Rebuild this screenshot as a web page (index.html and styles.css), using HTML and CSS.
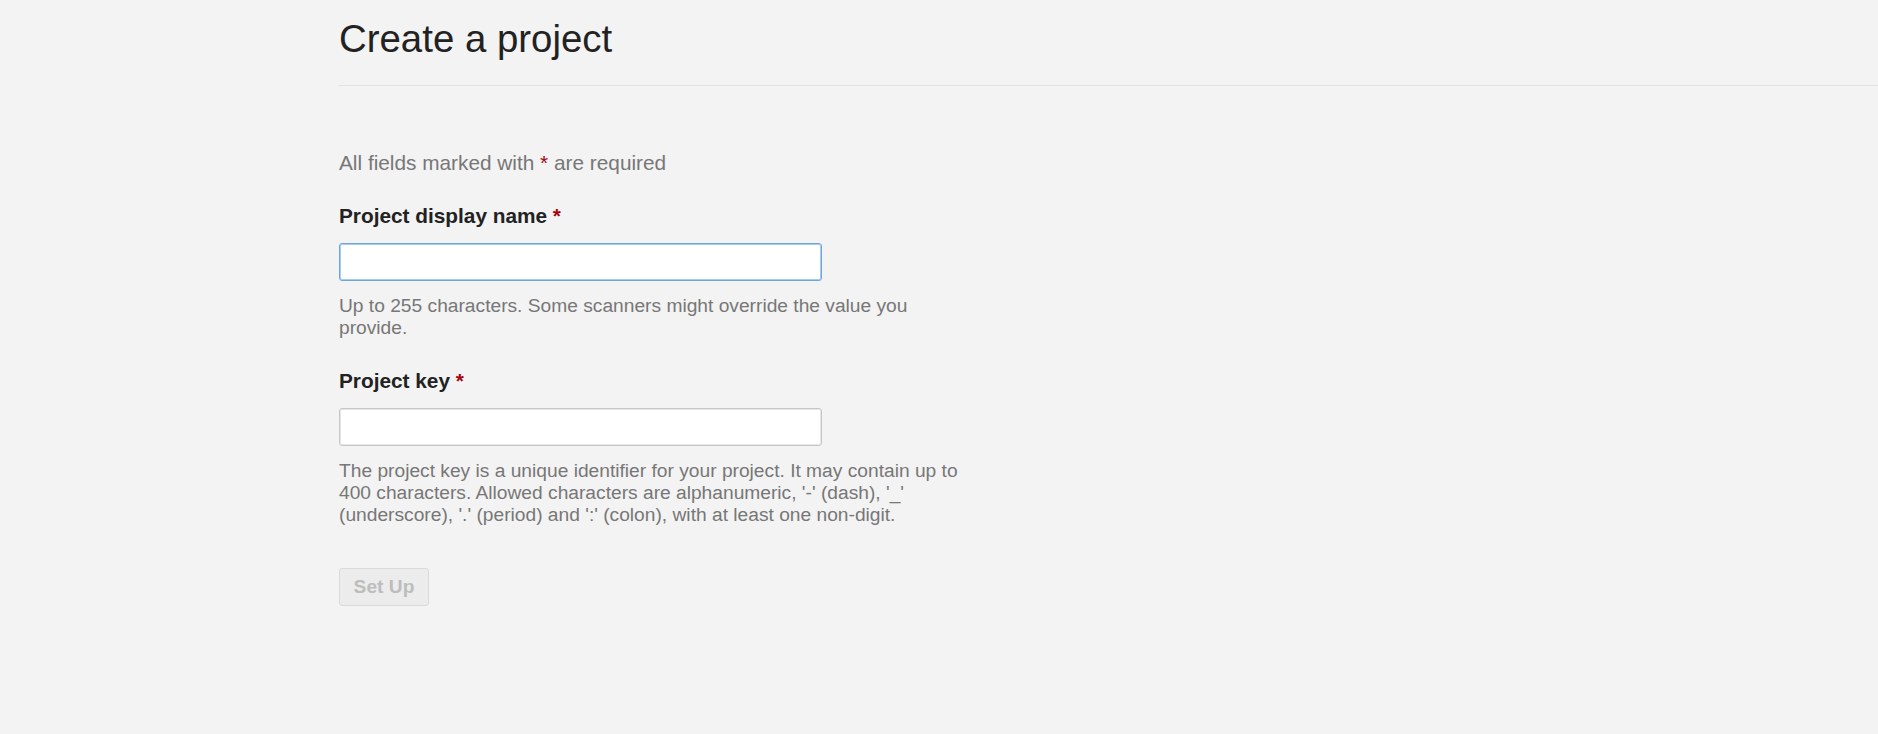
FILE: index.html
```html
<!DOCTYPE html>
<html lang="en">
<head>
<meta charset="utf-8">
<title>Create a project</title>
<link rel="stylesheet" href="styles.css">
</head>
<body>
<div class="page">
  <header class="page-header">
    <h1 class="page-title">Create a project</h1>
  </header>
  <form class="create-form">
    <p class="required-note">All fields marked with <span class="required">*</span> are required</p>
    <div class="field">
      <label class="field-label" for="project-name">Project display name <span class="required">*</span></label>
      <input class="field-input is-focused" id="project-name" type="text">
      <p class="field-help">Up to 255 characters. Some scanners might override the value you provide.</p>
    </div>
    <div class="field">
      <label class="field-label" for="project-key">Project key <span class="required">*</span></label>
      <input class="field-input" id="project-key" type="text">
      <p class="field-help">The project key is a unique identifier for your project. It may contain up to 400 characters. Allowed characters are alphanumeric, '-' (dash), '_' (underscore), '.' (period) and ':' (colon), with at least one non-digit.</p>
    </div>
    <button class="submit-button" type="button" disabled>Set Up</button>
  </form>
</div>
</body>
</html>
```
FILE: styles.css
```css
html, body {
  margin: 0;
  padding: 0;
  background: #f3f3f3;
}

body {
  font-family: "Liberation Sans", Arial, sans-serif;
  font-size: 20.8px;
  color: #333;
}

.page {
  padding-left: 339px;
}

.page-header {
  padding-top: 15px;
  padding-bottom: 22px;
  border-bottom: 1px solid #e2e2e2;
}

.page-title {
  margin: 0;
  font-size: 38.4px;
  line-height: 48px;
  font-weight: 400;
  color: #222;
}

.create-form {
  padding-top: 63px;
}

.required-note {
  margin: 0 0 25px;
  line-height: 28px;
  color: #777;
}

.required-note .required {
  font-weight: 400;
}

.required {
  color: #a4030f;
  font-weight: 700;
}

.field {
  display: flex;
  flex-direction: column;
  align-items: flex-start;
  margin-bottom: 28px;
}

.field-label {
  display: block;
  line-height: 28px;
  font-weight: 700;
  color: #222;
  margin-bottom: 13px;
}

.field-input {
  box-sizing: border-box;
  width: 483px;
  height: 38px;
  margin: 0;
  padding: 0 8px;
  background: #fff;
  border: 1px solid #c6c6c6;
  border-radius: 3px;
  box-shadow: inset 0 0 0 1px #e6e6e6;
  font: inherit;
  outline: none;
}

.field-input.is-focused {
  border-color: #6ea6dc;
  box-shadow: inset 0 0 0 1px #a9cbed;
}

.field-help {
  margin: 14px 0 0;
  max-width: 640px;
  font-size: 19.2px;
  line-height: 22px;
  color: #777;
}

.submit-button {
  display: block;
  box-sizing: border-box;
  margin-top: 42px;
  height: 38px;
  width: 90px;
  padding: 0;
  font-family: "Liberation Sans", Arial, sans-serif;
  font-size: 19.2px;
  font-weight: 700;
  color: #bdbdbd;
  background: #ececec;
  border: 1px solid #dadada;
  border-radius: 3px;
}
```
